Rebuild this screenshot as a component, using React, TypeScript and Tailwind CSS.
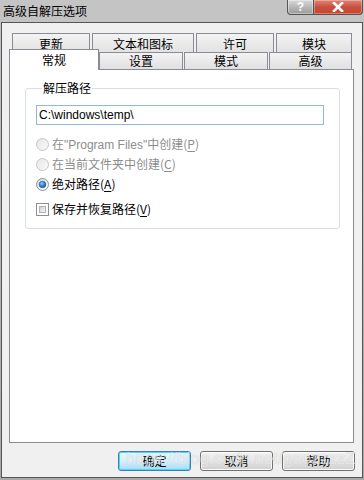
import React from 'react';

const cjk = "font-['Noto_Sans_CJK_SC','Microsoft_YaHei',sans-serif]";

function Radio({ checked, disabled }: { checked?: boolean; disabled?: boolean }) {
    return (
        <svg width="13" height="13" viewBox="0 0 13 13" className="shrink-0">
            <defs>
                <linearGradient id={`rg${checked ? 1 : 0}${disabled ? 1 : 0}`} x1="0" y1="0" x2="1" y2="1">
                    <stop offset="0" stopColor={disabled ? '#e6e6e6' : '#d8d8d8'} />
                    <stop offset="1" stopColor={disabled ? '#fafafa' : '#ffffff'} />
                </linearGradient>
                <radialGradient id="dot" cx="0.4" cy="0.35" r="0.7">
                    <stop offset="0" stopColor="#9fd6ff" />
                    <stop offset="0.5" stopColor="#2a8ad4" />
                    <stop offset="1" stopColor="#0b4f8c" />
                </radialGradient>
            </defs>
            <circle cx="6.5" cy="6.5" r="6" fill={`url(#rg${checked ? 1 : 0}${disabled ? 1 : 0})`} stroke={disabled ? '#c5c5c5' : '#8e8f8f'} />
            {checked && <circle cx="6.5" cy="6.5" r="3.3" fill="url(#dot)" stroke="#1c5a8e" strokeWidth="0.6" />}
        </svg>
    );
}

function Checkbox() {
    return (
        <div className="w-[13px] h-[13px] shrink-0 border border-[#8e8f8f] bg-white p-[2px]">
            <div className="w-full h-full border border-[#aeb3b9] bg-gradient-to-br from-[#cbcfd5] to-[#f6f6f6]" />
        </div>
    );
}

function Key({ k }: { k: string }) {
    return (
        <span>
            (<span className="underline underline-offset-[2px]">{k}</span>)
        </span>
    );
}

function BackTab({ label, w }: { label: string; w: string }) {
    return (
        <div className={`${w} h-[19px] border border-[#898c95] border-b-0 bg-gradient-to-b from-[#f3f3f3] to-[#e2e2e2] flex justify-center pt-[2px] leading-[16px]`}>
            {label}
        </div>
    );
}

function FrontTab({ label, w }: { label: string; w: string }) {
    return (
        <div className={`${w} mt-[3px] h-[17px] border border-[#898c95] border-b-0 bg-gradient-to-b from-[#f3f3f3] to-[#e0e0e0] flex justify-center items-center leading-[16px]`}>
            {label}
        </div>
    );
}

function Btn({ label, primary }: { label: string; primary?: boolean }) {
    return (
        <div
            className={`w-[73px] h-[20px] rounded-[3px] border flex items-center justify-center leading-[16px] ${
                primary
                    ? 'border-[#3c7fb1] bg-gradient-to-b from-[#eaf6fd] via-[#d9f0fc] to-[#a7d9f5] shadow-[inset_0_0_0_1px_#48d8fd]'
                    : 'border-[#707070] bg-gradient-to-b from-[#f2f2f2] via-[#e6e6e6] to-[#cfcfcf] shadow-[inset_0_0_0_1px_#fcfcfc]'
            }`}
        >
            {label}
        </div>
    );
}

export default function App() {
    return (
        <div className={`w-[364px] h-[480px] bg-gradient-to-b from-[#c4c4c4] to-[#a9a9a9] flex flex-col text-[12px] text-black relative ${cjk}`}>
            {/* title bar */}
            <div className="h-[22px] flex items-start justify-between">
                <div className="pl-[3px] pt-[3px] leading-[16px] text-[12px]">高级自解压选项</div>
                <div className="flex mr-[1px]">
                    <div className="w-[27px] h-[15px] rounded-bl-[4px] border border-t-0 border-[#555] bg-gradient-to-b from-[#d8d8d8] to-[#9a9a9a] flex items-center justify-center text-white font-bold text-[12px] leading-[12px] font-['Liberation_Sans',sans-serif] shadow-[inset_0_0_0_1px_rgba(255,255,255,0.4)]">
                        ?
                    </div>
                    <div className="w-[49px] h-[15px] rounded-br-[4px] border border-t-0 border-l-0 border-[#555] bg-gradient-to-b from-[#e0867a] via-[#c8503e] to-[#c9452f] flex items-center justify-center shadow-[inset_0_0_0_1px_rgba(255,255,255,0.3)]">
                        <svg width="12" height="10" viewBox="0 0 12 10">
                            <path d="M2 1 L10 9 M10 1 L2 9" stroke="#ffffff" strokeWidth="2.6" strokeLinecap="square" />
                        </svg>
                    </div>
                </div>
            </div>

            {/* client area */}
            <div className="flex-1 mx-[1px] mb-[2px] border border-[#555] bg-[#f0f0f0] flex flex-col pt-[10px] pl-[7px] pr-[8px]">
                <div className="flex gap-[2px] ml-[3px]">
                    <BackTab label="更新" w="w-[78px]" />
                    <BackTab label="文本和图标" w="w-[102px]" />
                    <BackTab label="许可" w="w-[78px]" />
                    <BackTab label="模块" w="w-[76px]" />
                </div>
                <div className="flex h-[20px] -mt-[3px] items-start">
                    <div className="relative z-10 w-[90px] h-[21px] border border-[#898c95] border-b-0 bg-white flex justify-center pt-[2px] leading-[16px]">
                        常规
                    </div>
                    <div className="flex gap-[1px]">
                        <FrontTab label="设置" w="w-[84px]" />
                        <FrontTab label="模式" w="w-[84px]" />
                        <FrontTab label="高级" w="w-[83px]" />
                    </div>
                </div>
                <div className="flex-1 border border-[#898c95] bg-white pl-[15px] pt-[10px]">
                    <fieldset className="w-[315px] border border-[#d5dfe5] rounded-[3px] pl-[10px] pb-[9px]">
                        <legend className="ml-[6px] px-[1px] leading-[16px]">解压路径</legend>
                        <div className="mt-[9px] w-[288px] h-[20px] border border-[#8fb8dc] bg-white flex items-center pl-[2px] font-['Liberation_Sans',sans-serif] text-[12px]">
                            C:\windows\temp\
                        </div>
                        <div className="mt-[9px] flex flex-col">
                            <div className="h-[20px] flex items-center gap-[3px] text-[#8d8d8d]">
                                <Radio disabled />
                                <span className="leading-[16px]">
                                    在<span className="font-['Liberation_Sans',sans-serif]">"Program Files"</span>中创建<Key k="P" />
                                </span>
                            </div>
                            <div className="h-[20px] flex items-center gap-[3px] text-[#8d8d8d]">
                                <Radio disabled />
                                <span className="leading-[16px]">
                                    在当前文件夹中创建<Key k="C" />
                                </span>
                            </div>
                            <div className="h-[20px] flex items-center gap-[3px]">
                                <Radio checked />
                                <span className="leading-[16px]">
                                    绝对路径<Key k="A" />
                                </span>
                            </div>
                            <div className="mt-[5px] h-[20px] flex items-center gap-[3px]">
                                <Checkbox />
                                <span className="leading-[16px]">
                                    保存并恢复路径<Key k="V" />
                                </span>
                            </div>
                        </div>
                    </fieldset>
                </div>
                <div className="mt-[8px] mb-[6px] -mr-[1px] flex justify-end gap-[9px]">
                    <Btn label="确定" primary />
                    <Btn label="取消" />
                    <Btn label="帮助" />
                </div>
            </div>

            {/* watermark */}
            <div className="absolute left-[126px] top-[449px] pointer-events-none text-[17px] leading-[20px] font-['Liberation_Sans',sans-serif] text-white/60 [text-shadow:0_0_1px_rgba(120,120,120,0.35)]">
                https://blog.csdn.net/gaozzzzZ
            </div>
        </div>
    );
}
